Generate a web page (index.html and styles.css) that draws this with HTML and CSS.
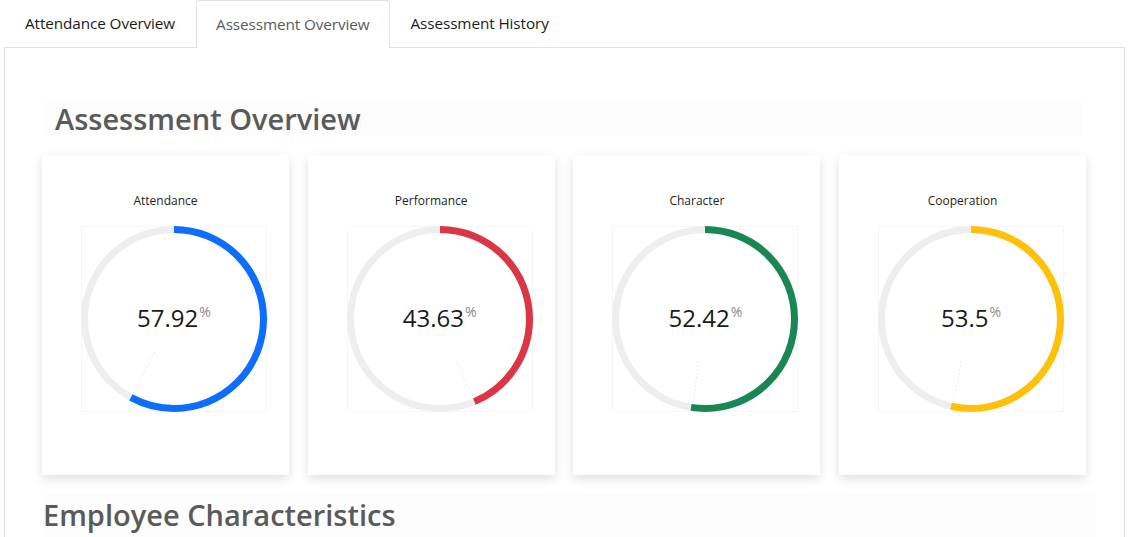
FILE: index.html
```html
<!DOCTYPE html>
<html lang="en">
<head>
<meta charset="utf-8">
<title>Assessment Overview</title>
<link rel="stylesheet" href="styles.css">
</head>
<body>
<nav class="tabs">
  <a class="tab">Attendance Overview</a>
  <a class="tab active">Assessment Overview</a>
  <a class="tab">Assessment History</a>
</nav>
<main class="panel">
  <h2 class="section-title first">Assessment Overview</h2>
  <div class="cards">
    <div class="card">
      <div class="card-title">Attendance</div>
      <div class="chart">
        <svg width="186" height="186" viewBox="0 0 186 186">
          <circle class="track" cx="93" cy="93" r="89.5"/>
          <line class="needle" x1="74" y1="126" x2="49" y2="174"/>
          <circle class="arc blue" cx="93" cy="93" r="89.5" stroke-dasharray="325.7 1000" transform="rotate(-90 93 93)"/>
        </svg>
        <div class="value"><span class="num">57.92</span><span class="pct">%</span></div>
      </div>
    </div>
    <div class="card">
      <div class="card-title">Performance</div>
      <div class="chart">
        <svg width="186" height="186" viewBox="0 0 186 186">
          <circle class="track" cx="93" cy="93" r="89.5"/>
          <line class="needle" x1="110" y1="136" x2="128" y2="176"/>
          <circle class="arc red" cx="93" cy="93" r="89.5" stroke-dasharray="245.4 1000" transform="rotate(-90 93 93)"/>
        </svg>
        <div class="value"><span class="num">43.63</span><span class="pct">%</span></div>
      </div>
    </div>
    <div class="card">
      <div class="card-title">Character</div>
      <div class="chart">
        <svg width="186" height="186" viewBox="0 0 186 186">
          <circle class="track" cx="93" cy="93" r="89.5"/>
          <line class="needle" x1="87" y1="135" x2="80" y2="182"/>
          <circle class="arc green" cx="93" cy="93" r="89.5" stroke-dasharray="294.8 1000" transform="rotate(-90 93 93)"/>
        </svg>
        <div class="value"><span class="num">52.42</span><span class="pct">%</span></div>
      </div>
    </div>
    <div class="card">
      <div class="card-title">Cooperation</div>
      <div class="chart">
        <svg width="186" height="186" viewBox="0 0 186 186">
          <circle class="track" cx="93" cy="93" r="89.5"/>
          <line class="needle" x1="83" y1="135" x2="75" y2="180"/>
          <circle class="arc yellow" cx="93" cy="93" r="89.5" stroke-dasharray="300.9 1000" transform="rotate(-90 93 93)"/>
        </svg>
        <div class="value"><span class="num">53.5</span><span class="pct">%</span></div>
      </div>
    </div>
  </div>
  <h2 class="section-title second">Employee Characteristics</h2>
</main>
</body>
</html>
```

FILE: styles.css
```css
html, body {
  margin: 0;
  padding: 0;
  height: 100%;
  background: #ffffff;
  font-family: "Open Sans", "Noto Sans", "Liberation Sans", sans-serif;
  color: #212529;
  overflow: hidden;
}

.tabs {
  display: flex;
  padding-left: 4px;
  height: 48px;
  position: relative;
  z-index: 1;
}

.tab {
  display: flex;
  align-items: center;
  padding: 0 20px 2px;
  height: 47px;
  box-sizing: border-box;
  font-size: 15.3px;
  color: #1a1a1a;
  border: 1px solid transparent;
  border-bottom: none;
  border-radius: 4px 4px 0 0;
  letter-spacing: -0.1px;
}

.tab.active {
  color: #555b61;
  background: #ffffff;
  border-color: #dee2e6;
  height: 48px;
  margin-bottom: -1px;
  padding: 0 19px 2px;
}

.panel {
  margin: -1px 7px 0 4px;
  border: 1px solid #dee2e6;
  border-bottom: none;
  height: calc(100% - 47px);
  padding: 52px 38px 0 37px;
  box-sizing: border-box;
  overflow: hidden;
}

.section-title {
  margin: 0;
  font-weight: 600;
  color: #5a5a5a;
  background: #fdfdfd;
}

.section-title.first {
  margin: 0 4px 0 3px;
  height: 35px;
  line-height: 37px;
  font-size: 29px;
  padding-left: 10px;
}

.cards {
  display: flex;
  gap: 18.7px;
  margin-top: 20px;
}

.card {
  width: 247px;
  height: 320px;
  background: #ffffff;
  box-shadow: 0 4px 10px rgba(0, 0, 0, 0.12);
  display: flex;
  flex-direction: column;
  align-items: center;
  padding-top: 38px;
  box-sizing: border-box;
  flex-shrink: 0;
}

.card-title {
  font-size: 12px;
  line-height: 16px;
  color: #1e1e1e;
}

.chart {
  margin-top: 17px;
  margin-left: 17px;
  width: 186px;
  height: 186px;
  position: relative;
  box-shadow: inset 0 0 0 1px #f6f6f6;
}

.chart svg {
  display: block;
}

.track {
  fill: none;
  stroke: #eeeeee;
  stroke-width: 7;
}

.arc {
  fill: none;
  stroke-width: 7;
}

.arc.blue { stroke: #0d6efd; }
.arc.red { stroke: #dc3545; }
.arc.green { stroke: #198754; }
.arc.yellow { stroke: #ffc107; }

.needle {
  stroke: #e4e4e4;
  stroke-width: 0.8;
  stroke-dasharray: 2 2;
}

.value {
  position: absolute;
  left: 0;
  right: 0;
  top: 76px;
  display: flex;
  justify-content: center;
  align-items: flex-start;
}

.num {
  font-size: 24px;
  line-height: 32px;
  color: #1a1a1a;
}

.pct {
  font-size: 14px;
  line-height: 20px;
  color: #8a8a8a;
  margin-left: 1px;
}

.section-title.second {
  margin: 19px -9px 0 1px;
  padding-left: 0;
  height: 45px;
  line-height: 42px;
  font-size: 29px;
}
```
